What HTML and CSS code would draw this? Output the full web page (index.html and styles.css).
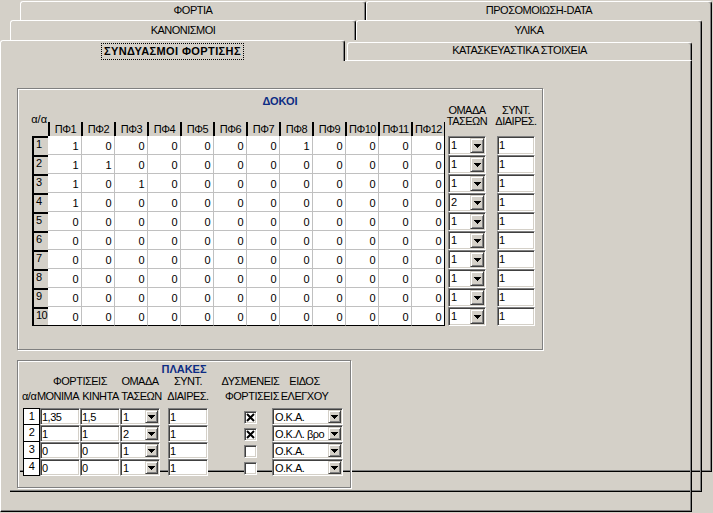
FILE: index.html
```html
<!DOCTYPE html>
<html lang="el">
<head>
<meta charset="utf-8">
<title>Συνδυασμοί φορτίσης</title>
<link rel="stylesheet" href="styles.css">
</head>
<body>
<div class="screen">
  <div class="sheet s1">
    <div class="tabrow">
      <div class="tab">ΦΟΡΤΙΑ</div>
      <div class="tab">ΠΡΟΣΟΜΟΙΩΣΗ-DATA</div>
    </div>
    <div class="page back"></div>
  </div>
  <div class="sheet s2">
    <div class="tabrow">
      <div class="tab">ΚΑΝΟΝΙΣΜΟΙ</div>
      <div class="tab">ΥΛΙΚΑ</div>
    </div>
    <div class="page back"></div>
  </div>
  <div class="sheet s3">
    <div class="tabrow">
      <div class="tab sel"><span class="focus">ΣΥΝΔΥΑΣΜΟΙ ΦΟΡΤΙΣΗΣ</span></div>
      <div class="tab">ΚΑΤΑΣΚΕΥΑΣΤΙΚΑ ΣΤΟΙΧΕΙΑ</div>
    </div>
    <div class="page front">

      <div class="group dokoi">
        <div class="gtitle">ΔΟΚΟΙ</div>
        <div class="dokoi-body">
          <div class="gridwrap">
            <div class="aa">α/α</div>
            <div class="grid">
              <div></div>
              <div class="hc">ΠΦ1</div><div class="hc">ΠΦ2</div><div class="hc">ΠΦ3</div><div class="hc">ΠΦ4</div><div class="hc">ΠΦ5</div><div class="hc">ΠΦ6</div><div class="hc">ΠΦ7</div><div class="hc">ΠΦ8</div><div class="hc">ΠΦ9</div><div class="hc">ΠΦ10</div><div class="hc">ΠΦ11</div><div class="hc">ΠΦ12</div>

              <div class="rh">1</div><div class="c">1</div><div class="c">0</div><div class="c">0</div><div class="c">0</div><div class="c">0</div><div class="c">0</div><div class="c">0</div><div class="c">1</div><div class="c">0</div><div class="c">0</div><div class="c">0</div><div class="c">0</div>
              <div class="rh">2</div><div class="c">1</div><div class="c">1</div><div class="c">0</div><div class="c">0</div><div class="c">0</div><div class="c">0</div><div class="c">0</div><div class="c">0</div><div class="c">0</div><div class="c">0</div><div class="c">0</div><div class="c">0</div>
              <div class="rh">3</div><div class="c">1</div><div class="c">0</div><div class="c">1</div><div class="c">0</div><div class="c">0</div><div class="c">0</div><div class="c">0</div><div class="c">0</div><div class="c">0</div><div class="c">0</div><div class="c">0</div><div class="c">0</div>
              <div class="rh">4</div><div class="c">1</div><div class="c">0</div><div class="c">0</div><div class="c">0</div><div class="c">0</div><div class="c">0</div><div class="c">0</div><div class="c">0</div><div class="c">0</div><div class="c">0</div><div class="c">0</div><div class="c">0</div>
              <div class="rh">5</div><div class="c">0</div><div class="c">0</div><div class="c">0</div><div class="c">0</div><div class="c">0</div><div class="c">0</div><div class="c">0</div><div class="c">0</div><div class="c">0</div><div class="c">0</div><div class="c">0</div><div class="c">0</div>
              <div class="rh">6</div><div class="c">0</div><div class="c">0</div><div class="c">0</div><div class="c">0</div><div class="c">0</div><div class="c">0</div><div class="c">0</div><div class="c">0</div><div class="c">0</div><div class="c">0</div><div class="c">0</div><div class="c">0</div>
              <div class="rh">7</div><div class="c">0</div><div class="c">0</div><div class="c">0</div><div class="c">0</div><div class="c">0</div><div class="c">0</div><div class="c">0</div><div class="c">0</div><div class="c">0</div><div class="c">0</div><div class="c">0</div><div class="c">0</div>
              <div class="rh">8</div><div class="c">0</div><div class="c">0</div><div class="c">0</div><div class="c">0</div><div class="c">0</div><div class="c">0</div><div class="c">0</div><div class="c">0</div><div class="c">0</div><div class="c">0</div><div class="c">0</div><div class="c">0</div>
              <div class="rh">9</div><div class="c">0</div><div class="c">0</div><div class="c">0</div><div class="c">0</div><div class="c">0</div><div class="c">0</div><div class="c">0</div><div class="c">0</div><div class="c">0</div><div class="c">0</div><div class="c">0</div><div class="c">0</div>
              <div class="rh b">10</div><div class="c b">0</div><div class="c b">0</div><div class="c b">0</div><div class="c b">0</div><div class="c b">0</div><div class="c b">0</div><div class="c b">0</div><div class="c b">0</div><div class="c b">0</div><div class="c b">0</div><div class="c b">0</div><div class="c b">0</div>
            </div>
          </div>

          <div class="ccol">
            <div class="chead"><span>ΟΜΑΔΑ</span><span>ΤΑΣΕΩΝ</span></div>
            <div class="combo"><span class="cv">1</span><span class="btn"><svg class="arr" width="7" height="4" viewBox="0 0 7 4"><path d="M0 0H7V1H6V2H5V3H4V4H3V3H2V2H1V1H0Z"/></svg></span></div>
            <div class="combo"><span class="cv">1</span><span class="btn"><svg class="arr" width="7" height="4" viewBox="0 0 7 4"><path d="M0 0H7V1H6V2H5V3H4V4H3V3H2V2H1V1H0Z"/></svg></span></div>
            <div class="combo"><span class="cv">1</span><span class="btn"><svg class="arr" width="7" height="4" viewBox="0 0 7 4"><path d="M0 0H7V1H6V2H5V3H4V4H3V3H2V2H1V1H0Z"/></svg></span></div>
            <div class="combo"><span class="cv">2</span><span class="btn"><svg class="arr" width="7" height="4" viewBox="0 0 7 4"><path d="M0 0H7V1H6V2H5V3H4V4H3V3H2V2H1V1H0Z"/></svg></span></div>
            <div class="combo"><span class="cv">1</span><span class="btn"><svg class="arr" width="7" height="4" viewBox="0 0 7 4"><path d="M0 0H7V1H6V2H5V3H4V4H3V3H2V2H1V1H0Z"/></svg></span></div>
            <div class="combo"><span class="cv">1</span><span class="btn"><svg class="arr" width="7" height="4" viewBox="0 0 7 4"><path d="M0 0H7V1H6V2H5V3H4V4H3V3H2V2H1V1H0Z"/></svg></span></div>
            <div class="combo"><span class="cv">1</span><span class="btn"><svg class="arr" width="7" height="4" viewBox="0 0 7 4"><path d="M0 0H7V1H6V2H5V3H4V4H3V3H2V2H1V1H0Z"/></svg></span></div>
            <div class="combo"><span class="cv">1</span><span class="btn"><svg class="arr" width="7" height="4" viewBox="0 0 7 4"><path d="M0 0H7V1H6V2H5V3H4V4H3V3H2V2H1V1H0Z"/></svg></span></div>
            <div class="combo"><span class="cv">1</span><span class="btn"><svg class="arr" width="7" height="4" viewBox="0 0 7 4"><path d="M0 0H7V1H6V2H5V3H4V4H3V3H2V2H1V1H0Z"/></svg></span></div>
            <div class="combo"><span class="cv">1</span><span class="btn"><svg class="arr" width="7" height="4" viewBox="0 0 7 4"><path d="M0 0H7V1H6V2H5V3H4V4H3V3H2V2H1V1H0Z"/></svg></span></div>
          </div>

          <div class="tcol">
            <div class="chead"><span>ΣΥΝΤ.</span><span>ΔΙΑΙΡΕΣ.</span></div>
            <div class="tb">1</div><div class="tb">1</div><div class="tb">1</div><div class="tb">1</div><div class="tb">1</div>
            <div class="tb">1</div><div class="tb">1</div><div class="tb">1</div><div class="tb">1</div><div class="tb">1</div>
          </div>
        </div>
      </div>

      <div class="group plakes">
        <div class="gtitle">ΠΛΑΚΕΣ</div>
        <div class="pcols phead">
          <div class="ph gr1 gc23">ΦΟΡΤΙΣΕΙΣ</div>
          <div class="ph gr1 gc4">ΟΜΑΔΑ</div>
          <div class="ph gr1 gc6">ΣΥΝΤ.</div>
          <div class="ph gr1 gc8">ΔΥΣΜΕΝΕΙΣ</div>
          <div class="ph gr1 gc10 eid">ΕΙΔΟΣ</div>
          <div class="aa2">α/α</div>
          <div class="ph gr2 gc2 mon">ΜΟΝΙΜΑ</div>
          <div class="ph gr2 gc3 kin">ΚΙΝΗΤΑ</div>
          <div class="ph gr2 gc4 tas">ΤΑΣΕΩΝ</div>
          <div class="ph gr2 gc6">ΔΙΑΙΡΕΣ.</div>
          <div class="ph gr2 gc8 fort2">ΦΟΡΤΙΣΕΙΣ</div>
          <div class="ph gr2 gc10 eid">ΕΛΕΓΧΟΥ</div>
        </div>
        <div class="pcols pdata">
          <div class="prh first">1</div>
          <div class="ptb">1,35</div>
          <div class="ptb">1,5</div>
          <div class="pcb"><span class="cv">1</span><span class="btn"><svg class="arr" width="7" height="4" viewBox="0 0 7 4"><path d="M0 0H7V1H6V2H5V3H4V4H3V3H2V2H1V1H0Z"/></svg></span></div>
          <div class="ptb gc6">1</div>
          <div class="chk gc8"><svg width="9" height="9" viewBox="0 0 9 9"><path d="M1 1L8 8M8 1L1 8" stroke="#000" stroke-width="2"/></svg></div>
          <div class="pcb gc10"><span class="cv">Ο.Κ.Α.</span><span class="btn"><svg class="arr" width="7" height="4" viewBox="0 0 7 4"><path d="M0 0H7V1H6V2H5V3H4V4H3V3H2V2H1V1H0Z"/></svg></span></div>

          <div class="prh">2</div>
          <div class="ptb">1</div>
          <div class="ptb">1</div>
          <div class="pcb"><span class="cv">2</span><span class="btn"><svg class="arr" width="7" height="4" viewBox="0 0 7 4"><path d="M0 0H7V1H6V2H5V3H4V4H3V3H2V2H1V1H0Z"/></svg></span></div>
          <div class="ptb gc6">1</div>
          <div class="chk gc8"><svg width="9" height="9" viewBox="0 0 9 9"><path d="M1 1L8 8M8 1L1 8" stroke="#000" stroke-width="2"/></svg></div>
          <div class="pcb gc10"><span class="cv">Ο.Κ.Λ. βρο</span><span class="btn"><svg class="arr" width="7" height="4" viewBox="0 0 7 4"><path d="M0 0H7V1H6V2H5V3H4V4H3V3H2V2H1V1H0Z"/></svg></span></div>

          <div class="prh">3</div>
          <div class="ptb">0</div>
          <div class="ptb">0</div>
          <div class="pcb"><span class="cv">1</span><span class="btn"><svg class="arr" width="7" height="4" viewBox="0 0 7 4"><path d="M0 0H7V1H6V2H5V3H4V4H3V3H2V2H1V1H0Z"/></svg></span></div>
          <div class="ptb gc6">1</div>
          <div class="chk gc8"></div>
          <div class="pcb gc10"><span class="cv">Ο.Κ.Α.</span><span class="btn"><svg class="arr" width="7" height="4" viewBox="0 0 7 4"><path d="M0 0H7V1H6V2H5V3H4V4H3V3H2V2H1V1H0Z"/></svg></span></div>

          <div class="prh">4</div>
          <div class="ptb">0</div>
          <div class="ptb">0</div>
          <div class="pcb"><span class="cv">1</span><span class="btn"><svg class="arr" width="7" height="4" viewBox="0 0 7 4"><path d="M0 0H7V1H6V2H5V3H4V4H3V3H2V2H1V1H0Z"/></svg></span></div>
          <div class="ptb gc6">1</div>
          <div class="chk gc8"></div>
          <div class="pcb gc10"><span class="cv">Ο.Κ.Α.</span><span class="btn"><svg class="arr" width="7" height="4" viewBox="0 0 7 4"><path d="M0 0H7V1H6V2H5V3H4V4H3V3H2V2H1V1H0Z"/></svg></span></div>
        </div>
      </div>

    </div>
  </div>
</div>
</body>
</html>
```
FILE: styles.css
```css
* { box-sizing: border-box; }
html, body { margin: 0; padding: 0; }
body {
  background: #d4d0c8;
  font-family: "Liberation Sans", Arial, sans-serif;
  font-size: 11px;
  letter-spacing: -0.5px;
  color: #000;
}
.screen {
  width: 713px;
  height: 513px;
  overflow: hidden;
  display: grid;
  align-items: start;
  justify-items: start;
  background: #d4d0c8;
}
.sheet {
  grid-area: 1 / 1;
  width: 692px;
  display: flex;
  flex-direction: column;
}
.s1 { margin: 1px 0 0 20px; }
.s2 { margin: 20px 0 0 10px; }
.s3 { margin: 40px 0 0 0; }

/* tabs */
.tabrow { display: flex; height: 20px; align-items: flex-start; }
.s1 .tabrow { height: 19px; }
.tab {
  flex: 1;
  height: 100%;
  background: #d4d0c8;
  border: 1px solid;
  border-bottom: 0;
  border-color: #fff #000 transparent #fff;
  border-radius: 3px 3px 0 0;
  box-shadow: inset -1px 0 #808080;
  text-align: center;
  line-height: 13px;
  padding-top: 2px;
  white-space: nowrap;
}
.s2 .tab { padding-top: 3px; }
.s3 .tab { margin-top: 2px; height: 18px; padding-top: 1px; margin-left: 2px; }
.s3 .tab.sel {
  flex: none;
  width: 345px;
  height: 21px;
  margin: 0 0 -1px 0;
  padding-top: 2px;
  position: relative;
  z-index: 1;
}
.focus {
  display: inline-block;
  border: 1px dotted #000;
  padding: 1px 2px;
  line-height: 13px;
  font-weight: bold;
  letter-spacing: 0.4px;
}

/* pages */
.page { height: 452px; flex: none; }
.back {
  border-right: 1px solid #000;
  border-bottom: 1px solid #000;
  box-shadow: inset -1px -1px #808080;
}
.front {
  border: 1px solid;
  border-color: #fff #000 #000 #fff;
  box-shadow: inset -1px -1px #808080;
  padding: 27px 0 0 16px;
}

/* group boxes */
.group {
  border: 1px solid #808080;
  box-shadow: inset 1px 1px #fff, 1px 1px #fff;
}
.dokoi { width: 526px; height: 262px; }
.plakes { width: 334px; height: 128px; margin-top: 10px; }
.gtitle {
  font-weight: bold;
  color: #0c2c84;
  text-align: center;
  letter-spacing: 0;
  line-height: 12px;
}
.dokoi .gtitle { margin-top: 6px; height: 10px; }
.plakes .gtitle { margin-top: 2px; height: 11px; }

/* ΔΟΚΟΙ */
.dokoi-body { display: flex; align-items: flex-start; padding-left: 14px; }
.gridwrap { display: flex; flex-direction: column; }
.aa {
  margin: 9px 0 0 -8px;
  height: 8px;
  width: 23px;
  text-align: right;
  line-height: 11px;
  white-space: nowrap;
  letter-spacing: 0;
}
.grid {
  display: grid;
  grid-template-columns: 16px repeat(12, 33px);
  grid-template-rows: 14px;
  grid-auto-rows: 19px;
  border-right: 1px solid #000;
}
.hc {
  border-left: 2px solid #000;
  text-align: center;
  line-height: 14px;
  white-space: nowrap;
}
.rh {
  border-left: 2px solid #000;
  border-top: 2px solid #000;
  padding-left: 2px;
  line-height: 12px;
}
.rh.b { border-bottom: 1px solid #000; }
.c {
  background: #fff;
  border-left: 1px solid #c0c0c0;
  border-bottom: 1px solid #c0c0c0;
  text-align: right;
  padding: 2px 3px 0 0;
  line-height: 16px;
}
.rh + .c { border-left: 0; }
.c.b { border-bottom-color: #000; }

.ccol { width: 38px; margin-left: 3px; }
.tcol { width: 38px; margin-left: 11px; }
.chead {
  height: 31px;
  display: flex;
  flex-direction: column;
  align-items: center;
  line-height: 11px;
  white-space: nowrap;
}

/* sunken fields */
.combo, .tb, .pcb, .ptb {
  background: #fff;
  border: 1px solid;
  border-color: #808080 #fff #fff #808080;
  box-shadow: inset 1px 1px #404040, inset -1px -1px #d4d0c8;
  padding: 1px;
  white-space: nowrap;
}
.combo { height: 19px; display: flex; }
.pcb { height: 17px; display: flex; }
.tb { height: 19px; line-height: 15px; padding-left: 1px; }
.ptb { height: 17px; line-height: 15px; padding-left: 1px; }
.cv { flex: 1; overflow: hidden; line-height: 15px; padding-left: 1px; }
.btn {
  flex: none;
  width: 14px;
  height: 100%;
  background: #d4d0c8;
  border: 1px solid;
  border-color: #d4d0c8 #404040 #404040 #d4d0c8;
  box-shadow: inset 1px 1px #fff, inset -1px -1px #808080;
  display: flex;
  align-items: center;
  justify-content: center;
}
.pcb .btn { width: 13px; }
.arr { display: block; fill: #000; shape-rendering: crispEdges; }

/* ΠΛΑΚΕΣ */
.pcols {
  display: grid;
  grid-template-columns: 17px 40px 40px 40px 8px 40px 36px 13px 15px 71px;
  margin-left: 5px;
}
.phead { grid-template-rows: 15px 19px; }
.pdata { grid-auto-rows: 17px; }
.ph {
  display: flex;
  justify-content: center;
  white-space: nowrap;
  line-height: 15px;
}
.gr1 { grid-row: 1; }
.gr2 { grid-row: 2; }
.gc2 { grid-column: 2; }
.gc3 { grid-column: 3; }
.gc4 { grid-column: 4; }
.gc6 { grid-column: 6; }
.gc8 { grid-column: 8; }
.gc10 { grid-column: 10; }
.gc23 { grid-column: 2 / 4; }
.eid { padding-right: 6px; }
.mon { padding-right: 4px; }
.kin { padding-left: 1px; }
.tas { padding-left: 3px; }
.fort2 { padding-left: 3px; }
.aa2 {
  grid-row: 2;
  grid-column: 1;
  margin-left: -1px;
  white-space: nowrap;
  line-height: 15px;
}
.prh {
  border: 1px solid #000;
  border-top: 0;
  background: #fff;
  text-align: center;
  line-height: 15px;
}
.prh.first { border-top: 1px solid #000; line-height: 14px; }
.chk {
  width: 13px;
  height: 13px;
  align-self: start;
  margin-top: 3px;
  background: #fff;
  border: 1px solid;
  border-color: #808080 #fff #fff #808080;
  box-shadow: inset 1px 1px #404040, inset -1px -1px #d4d0c8;
  padding: 1px;
}
.chk svg { display: block; }
```
